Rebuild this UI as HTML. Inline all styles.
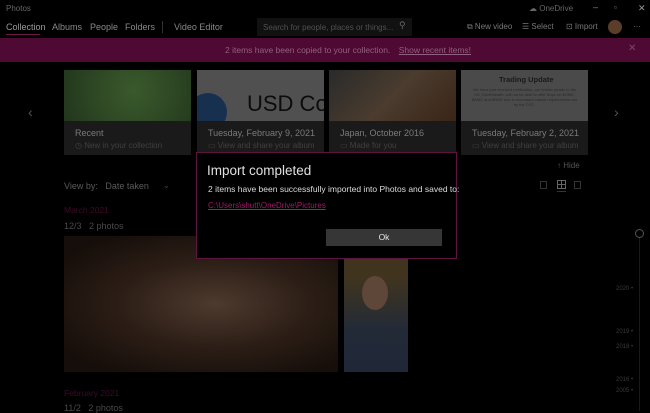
<!DOCTYPE html>
<html><head><style>
*{margin:0;padding:0;box-sizing:border-box}
body{width:650px;height:411px;background:#000;overflow:hidden;position:relative;font-family:"Liberation Sans",sans-serif;color:#888}
.a{position:absolute;white-space:nowrap}
.card{position:absolute;background:#1a1a1a}
.card .t{position:absolute;left:11px;top:7px;font-size:9px;color:#7a7a7a}
.card .s{position:absolute;left:11px;top:20px;font-size:8px;color:#404040}
.img{position:absolute;top:70px;height:52px}
</style></head><body>
<div class="a" style="left:6px;top:4px;font-size:8px;color:#666">Photos</div>
<div class="a" style="left:529px;top:4px;font-size:8px;color:#666">☁ OneDrive</div>
<div class="a" style="left:593px;top:2px;font-size:9px;color:#888">–</div>
<div class="a" style="left:614px;top:3px;font-size:8px;color:#888">▫</div>
<div class="a" style="left:638px;top:3px;font-size:9px;color:#999">✕</div>
<div class="a" style="left:6px;top:22px;font-size:9px;color:#999">Collection</div>
<div class="a" style="left:6px;top:34px;width:34px;height:1px;background:#6a1848"></div>
<div class="a" style="left:52px;top:22px;font-size:9px;color:#888">Albums</div>
<div class="a" style="left:90px;top:22px;font-size:9px;color:#888">People</div>
<div class="a" style="left:125px;top:22px;font-size:9px;color:#888">Folders</div>
<div class="a" style="left:162px;top:21px;width:1px;height:12px;background:#333"></div>
<div class="a" style="left:174px;top:22px;font-size:9px;color:#888">Video Editor</div>
<div class="a" style="left:257px;top:18px;width:155px;height:18px;background:#111"></div>
<div class="a" style="left:263px;top:23px;font-size:8px;color:#505050">Search for people, places or things...</div>
<div class="a" style="left:399px;top:20px;font-size:9px;color:#666">⚲</div>
<div class="a" style="left:467px;top:22px;font-size:8px;color:#777">⧉ New video</div>
<div class="a" style="left:522px;top:22px;font-size:8px;color:#777">☰ Select</div>
<div class="a" style="left:566px;top:22px;font-size:8px;color:#777">⊡ Import</div>
<div class="a" style="left:608px;top:20px;width:14px;height:14px;border-radius:50%;background:#5a3e2a"></div>
<div class="a" style="left:633px;top:22px;font-size:8px;color:#777">···</div>
<div class="a" style="left:0;top:38px;width:650px;height:24px;background:#4e0a33"></div>
<div class="a" style="left:225px;top:45px;font-size:8.5px;color:#906080">2 items have been copied to your collection. <span style="text-decoration:underline;margin-left:6px">Show recent items!</span></div>
<div class="a" style="left:628px;top:43px;font-size:10px;color:#7a4a68">✕</div>
<div class="a" style="left:28px;top:104px;font-size:14px;color:#555">‹</div>
<div class="a" style="left:614px;top:104px;font-size:14px;color:#555">›</div>
<div class="img" style="left:64px;width:127px;background:radial-gradient(circle at 55% 40%,#3a5a2c,#22361c)"></div>
<div class="img" style="left:197px;width:127px;background:#505050;overflow:hidden"><div class="a" style="left:-8px;top:23px;width:38px;height:38px;border-radius:50%;background:#183050"></div><div class="a" style="left:50px;top:21px;font-size:22px;color:#0c0c0c">USD Coin</div></div>
<div class="img" style="left:329px;width:127px;background:linear-gradient(135deg,#2a2a2a,#4a3c2e 50%,#3a2418)"></div>
<div class="img" style="left:461px;width:127px;background:#4a4a4a"><div class="a" style="left:38px;top:5px;font-size:7.5px;font-weight:bold;color:#1a1a1a">Trading Update</div><div class="a" style="left:10px;top:17px;width:107px;white-space:normal;font-size:4px;line-height:5px;color:#2a2a2a;text-align:center">We have just received notification, our broker-dealer in the US, DriveWealth, will not be able to offer Buys on $GME, $AMC and $NOK due to increased capital requirements set by the DTC.</div></div>
<div class="card" style="left:64px;top:121px;width:127px;height:34px"><div class="t">Recent</div><div class="s">◷ New in your collection</div></div>
<div class="card" style="left:197px;top:121px;width:127px;height:34px"><div class="t">Tuesday, February 9, 2021</div><div class="s">▭ View and share your album</div></div>
<div class="card" style="left:329px;top:121px;width:127px;height:34px"><div class="t">Japan, October 2016</div><div class="s">▭ Made for you</div></div>
<div class="card" style="left:461px;top:121px;width:127px;height:34px"><div class="t">Tuesday, February 2, 2021</div><div class="s">▭ View and share your album</div></div>
<div class="a" style="left:557px;top:161px;font-size:8px;color:#555">↑ Hide</div>
<div class="a" style="left:64px;top:181px;font-size:9px;color:#5a5a5a">View by: &nbsp;&nbsp;Date taken</div>
<div class="a" style="left:163px;top:181px;font-size:8px;color:#444">⌄</div>
<div class="a" style="left:540px;top:181px;width:7px;height:8px;border:1px solid #333"></div>
<div class="a" style="left:557px;top:180px;width:9px;height:9px;border:1px solid #666;background:linear-gradient(#666,#666) 3px 0/1px 9px no-repeat,linear-gradient(#666,#666) 0 3px/9px 1px no-repeat"></div>
<div class="a" style="left:557px;top:191px;width:9px;height:1px;background:#6a1848"></div>
<div class="a" style="left:574px;top:181px;width:7px;height:8px;border:1px solid #333"></div>
<div class="a" style="left:64px;top:205px;font-size:8.5px;color:#400a28">March 2021</div>
<div class="a" style="left:64px;top:221px;font-size:9px;color:#4a4a4a">12/3 &nbsp;&nbsp;2 photos</div>
<div class="a" style="left:64px;top:236px;width:274px;height:136px;background:radial-gradient(ellipse at 55% 50%,#4e3a2e,#2c1e16 45%,#160e0a 85%)"></div>
<div class="a" style="left:344px;top:236px;width:64px;height:136px;background:linear-gradient(#40341e,#40341e 30%,#222a38 70%,#202838)"><div class="a" style="left:18px;top:40px;width:26px;height:34px;border-radius:50%;background:#5e4638"></div></div>
<div class="a" style="left:64px;top:388px;font-size:8.5px;color:#400a28">February 2021</div>
<div class="a" style="left:64px;top:403px;font-size:9px;color:#4a4a4a">11/2 &nbsp;&nbsp;2 photos</div>
<div class="a" style="left:639px;top:237px;width:1px;height:174px;background:#1a1a1a"></div>
<div class="a" style="left:635px;top:229px;width:9px;height:9px;border-radius:50%;border:1px solid #555;background:#000"></div>
<div class="a" style="left:616px;top:286px;font-size:6px;color:#3a3a3a">2020 •</div>
<div class="a" style="left:616px;top:329px;font-size:6px;color:#3a3a3a">2019 •</div>
<div class="a" style="left:616px;top:344px;font-size:6px;color:#3a3a3a">2018 •</div>
<div class="a" style="left:616px;top:377px;font-size:6px;color:#3a3a3a">2016 •</div>
<div class="a" style="left:616px;top:388px;font-size:6px;color:#3a3a3a">2005 •</div>
<div class="a" style="left:196px;top:152px;width:261px;height:107px;background:#000;border:1px solid #5e1440"></div>
<div class="a" style="left:207px;top:163px;font-size:13.5px;color:#e0e0e0">Import completed</div>
<div class="a" style="left:208px;top:184px;font-size:8.5px;color:#dcdcdc">2 items have been successfully imported into Photos and saved to:</div>
<div class="a" style="left:208px;top:201px;font-size:8px;color:#a01c64;text-decoration:underline">C:\Users\shutt\OneDrive\Pictures</div>
<div class="a" style="left:326px;top:229px;width:116px;height:17px;background:#363636;color:#e8e8e8;font-size:8.5px;text-align:center;line-height:17px">Ok</div>
</body></html>
